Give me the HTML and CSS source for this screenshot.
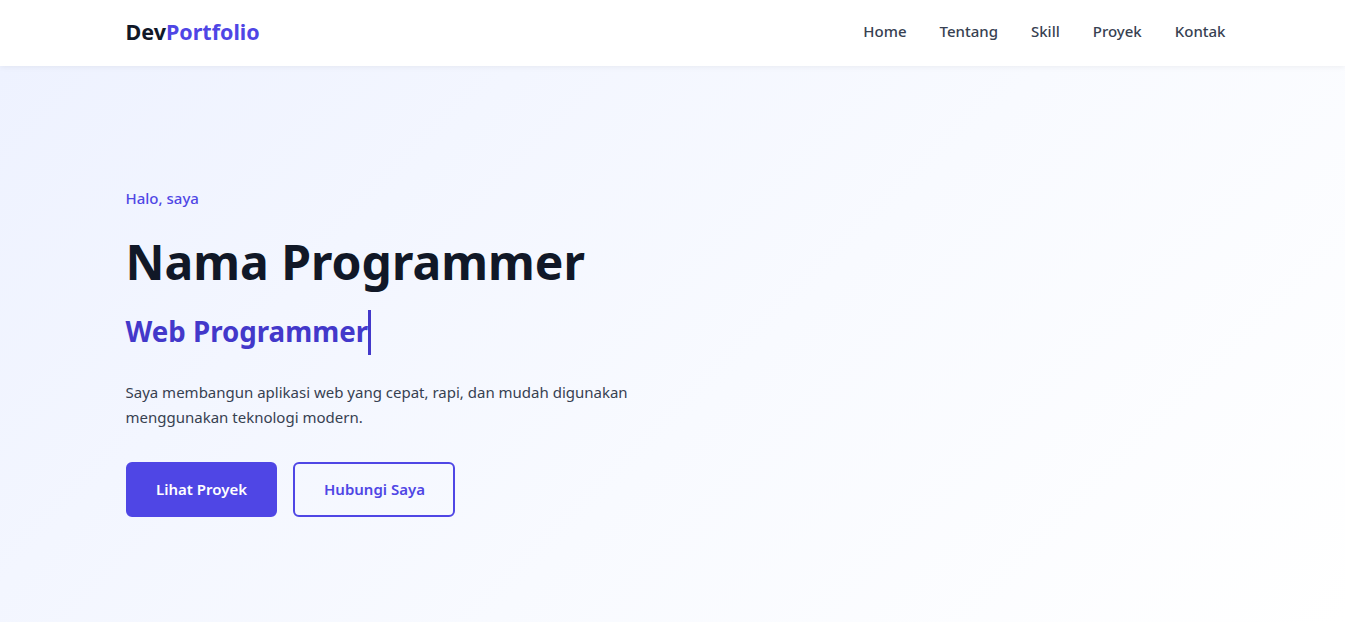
FILE: index.html
```html
<!DOCTYPE html>
<html lang="id">
<head>
    <meta charset="UTF-8">
    <meta name="viewport" content="width=device-width, initial-scale=1.0">
    <title>DevPortfolio</title>
    <link rel="stylesheet" href="styles.css">
</head>
<body>
    <!-- Navbar -->
    <header class="navbar">
        <div class="container nav-inner">
            <a href="#" class="logo">Dev<span>Portfolio</span></a>
            <nav class="nav-links">
                <a href="#home">Home</a>
                <a href="#tentang">Tentang</a>
                <a href="#skill">Skill</a>
                <a href="#proyek">Proyek</a>
                <a href="#kontak">Kontak</a>
            </nav>
        </div>
    </header>

    <!-- Hero -->
    <section class="hero" id="home">
        <div class="container">
            <p class="greeting">Halo, saya</p>
            <h1 class="hero-title">Nama Programmer</h1>
            <h2 class="hero-role"><span class="typing">Web Programmer</span></h2>
            <p class="hero-desc">Saya membangun aplikasi web yang cepat, rapi, dan mudah digunakan menggunakan teknologi modern.</p>
            <div class="hero-buttons">
                <a href="#proyek" class="btn btn-primary">Lihat Proyek</a>
                <a href="#kontak" class="btn btn-outline">Hubungi Saya</a>
            </div>
        </div>
    </section>
</body>
</html>
```

FILE: styles.css
```css
* {
    box-sizing: border-box;
}

html, body {
    margin: 0;
    padding: 0;
    height: 100%;
    overflow: hidden;
}

body {
    font-family: "Noto Sans", "Open Sans", sans-serif;
    color: #111827;
    background-color: #ffffff;
}

a {
    text-decoration: none;
}

.container {
    max-width: 1100px;
    margin: 0 auto;
    padding-left: 3px;
}

/* Navbar */
.navbar {
    position: relative;
    z-index: 10;
    height: 66px;
    background-color: #ffffff;
    box-shadow: 0 1px 6px rgba(0, 0, 0, 0.06);
}

.nav-inner {
    height: 100%;
    padding-bottom: 4px;
    display: flex;
    align-items: center;
    justify-content: space-between;
}

.logo {
    font-size: 21.5px;
    font-weight: 700;
    color: #111827;
}

.logo span {
    color: #4f46e5;
}

.nav-links {
    display: flex;
    gap: 33px;
    margin-right: -3px;
}

.nav-links a {
    font-size: 15px;
    font-weight: 500;
    color: #374151;
}

/* Hero */
.hero {
    height: 556px;
    padding-top: 122px;
    background: linear-gradient(135deg, #eef2ff 0%, #f8faff 55%, #ffffff 100%);
}

.greeting {
    margin: 0;
    font-size: 15px;
    font-weight: 500;
    color: #4f46e5;
}

.hero-title {
    margin: 25px 0 0;
    font-size: 48px;
    font-weight: 700;
    line-height: 58px;
    color: #111827;
}

.hero-role {
    margin: 19px 0 0;
    font-size: 27.7px;
    font-weight: 700;
    line-height: 1;
    color: #4338ca;
}

.typing {
    display: inline-block;
    padding: 8px 0 9px;
    border-right: 3px solid #4338ca;
}

.hero-desc {
    max-width: 520px;
    margin: 25px 0 0;
    font-size: 15px;
    line-height: 25px;
    color: #374151;
}

.hero-buttons {
    display: flex;
    gap: 16px;
    margin-top: 32px;
}

.btn {
    display: inline-block;
    padding: 15px 28.5px;
    border-radius: 6px;
    font-size: 15px;
    font-weight: 600;
    line-height: 21px;
}

.btn-primary {
    background-color: #4f46e5;
    border: 2px solid #4f46e5;
    color: #ffffff;
}

.btn-outline {
    border: 2px solid #4f46e5;
    color: #4f46e5;
}
```
